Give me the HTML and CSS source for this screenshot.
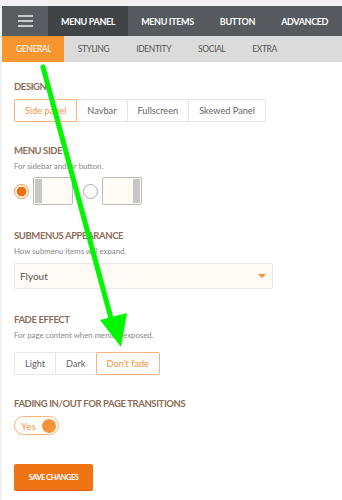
FILE: index.html
```html
<!DOCTYPE html>
<html>
<head>
<meta charset="utf-8">
<link rel="stylesheet" href="styles.css">
</head>
<body>
<div class="panel">
  <nav class="topbar">
    <div class="burger"><span></span><span></span><span></span></div>
    <div class="tab active">MENU PANEL</div>
    <div class="tab">MENU ITEMS</div>
    <div class="tab">BUTTON</div>
    <div class="tab">ADVANCED</div>
  </nav>
  <nav class="subbar">
    <div class="subtab active">GENERAL</div>
    <div class="subtab">STYLING</div>
    <div class="subtab">IDENTITY</div>
    <div class="subtab">SOCIAL</div>
    <div class="subtab">EXTRA</div>
  </nav>
  <main class="content">
    <section class="sec sec-design">
      <h3 class="head">DESIGN</h3>
      <div class="seg">
        <div class="opt on">Side panel</div>
        <div class="opt">Navbar</div>
        <div class="opt">Fullscreen</div>
        <div class="opt">Skewed Panel</div>
      </div>
    </section>
    <section class="sec sec-side">
      <h3 class="head">MENU SIDE</h3>
      <p class="sub">For sidebar and/or button.</p>
      <div class="sides">
        <span class="radio checked"></span>
        <span class="box left"><i></i></span>
        <span class="radio"></span>
        <span class="box right"><i></i></span>
      </div>
    </section>
    <section class="sec sec-sub">
      <h3 class="head">SUBMENUS APPEARANCE</h3>
      <p class="sub">How submenu items will expand.</p>
      <div class="select">Flyout<span class="caret"></span></div>
    </section>
    <section class="sec sec-fade">
      <h3 class="head">FADE EFFECT</h3>
      <p class="sub">For page content when menu is exposed.</p>
      <div class="seg seg-fade">
        <div class="opt">Light</div>
        <div class="opt">Dark</div>
        <div class="opt on">Don't fade</div>
      </div>
    </section>
    <section class="sec sec-trans">
      <h3 class="head">FADING IN/OUT FOR PAGE TRANSITIONS</h3>
      <div class="toggle">Yes<span class="knob"></span></div>
    </section>
    <button class="save">SAVE CHANGES</button>
  </main>
</div>
<svg class="arrow" width="342" height="500" viewBox="0 0 342 500">
  <line x1="43" y1="67" x2="112" y2="322" stroke="#00f700" stroke-width="5" stroke-linecap="round"/>
  <polygon points="100,320 127,313 121,347" fill="#00f700"/>
</svg>
</body>
</html>
```

FILE: styles.css
```css
html, body { margin: 0; padding: 0; }
body {
  background: #f1f1f1;
  padding: 6px 0 0 2px;
  font-family: Lato, "Open Sans", sans-serif;
  width: 342px;
  height: 500px;
  box-sizing: border-box;
  overflow: hidden;
  position: relative;
}
.panel { background: #fff; height: 494px; }
.topbar {
  display: flex;
  height: 30px;
  background: #56595d;
}
.burger {
  width: 46px;
  display: flex;
  flex-direction: column;
  justify-content: center;
  align-items: center;
  gap: 3.5px;
  background: #595d61;
  flex: none;
}
.burger span { display: block; width: 15px; height: 1.5px; background: #c9cacb; }
.tab {
  padding: 0 13px;
  color: #fff;
  font-size: 9px;
  font-weight: 700;
  letter-spacing: -0.35px;
  display: flex;
  align-items: center;
  white-space: nowrap;
  flex: none;
}
.tab.active { background: #404447; }
.subbar {
  display: flex;
  height: 26px;
  background: #dbdbdb;
}
.subtab {
  padding: 0 13.5px;
  font-size: 8.5px;
  color: #555;
  display: flex;
  align-items: center;
  letter-spacing: -0.4px;
  white-space: nowrap;
}
.subtab.active { background: #f7952f; color: #fff; padding: 0 13px 0 14px; }
.content { padding: 18px 12px 0; }
.sec { margin: 0; }
.head {
  margin: 0;
  font-size: 9.5px;
  line-height: 14px;
  font-weight: 700;
  color: #8c6e58;
  letter-spacing: -0.4px;
  white-space: nowrap;
}
.sub {
  margin: 2px 0 0;
  font-size: 7.8px;
  line-height: 12px;
  color: #888;
}
.seg { display: flex; margin-top: 5px; }
.opt {
  height: 23px;
  box-sizing: border-box;
  border: 1px solid #e6e6e6;
  margin-left: -1px;
  padding: 0 10px;
  display: flex;
  align-items: center;
  font-size: 9.2px;
  color: #666;
  white-space: nowrap;
}
.opt:first-child { margin-left: 0; border-radius: 2px 0 0 2px; }
.opt:last-child { border-radius: 0 2px 2px 0; }
.opt.on { border-color: #fab37a; color: #f7943a; position: relative; border-radius: 2px; }
.sec-side { margin-top: 22px; }
.sides { display: flex; align-items: center; margin-top: 5px; }
.radio {
  width: 15px;
  height: 15px;
  box-sizing: border-box;
  border-radius: 50%;
  border: 1px solid #aaa;
  margin-right: 4px;
}
.radio.checked { border-color: #f7943a; background: radial-gradient(circle, #f06e10 0 4.6px, #fff 5.2px); }
.box {
  width: 40px;
  height: 28px;
  box-sizing: border-box;
  border: 1px solid #bbb;
  border-radius: 2px;
  background: #fffaf3;
  display: flex;
  margin-right: 10px;
}
.box i { display: block; width: 7px; background: #c7c7c7; margin: 1px; }
.box.right { justify-content: flex-end; }
.sec-sub { margin-top: 24px; }
.select {
  margin-top: 6px;
  width: 259px;
  height: 26px;
  box-sizing: border-box;
  border: 1px solid #ebe7e3;
  border-radius: 2px;
  background: #fffaf5;
  display: flex;
  align-items: center;
  justify-content: space-between;
  padding: 0 6px 0 5px;
  font-size: 10px;
  color: #555;
}
.caret {
  width: 0; height: 0;
  border-left: 4px solid transparent;
  border-right: 4px solid transparent;
  border-top: 4px solid #f7943a;
}
.sec-fade { margin-top: 24px; }
.seg-fade { margin-top: 11px; }
.seg-fade .opt { padding: 0 10px; }
.sec-trans { margin-top: 22px; }
.toggle {
  margin-top: 5px;
  width: 45px;
  height: 19px;
  box-sizing: border-box;
  border: 1px solid #f9b57a;
  border-radius: 10px;
  display: flex;
  align-items: center;
  justify-content: space-between;
  padding: 0 2px 0 6px;
  font-size: 10px;
  color: #f7943a;
}
.knob { width: 14px; height: 14px; border-radius: 50%; background: #f7943a; }
.save {
  display: block;
  margin-top: 29px;
  width: 79px;
  height: 26px;
  border: none;
  border-radius: 2px;
  background: #f07314;
  color: #fff;
  font-family: Lato, sans-serif;
  font-size: 7.5px;
  font-weight: 700;
  letter-spacing: -0.5px;
  box-shadow: 0 1px 0 #d9600a;
  padding: 0;
}
.arrow { position: absolute; left: 0; top: 0; pointer-events: none; }
```
